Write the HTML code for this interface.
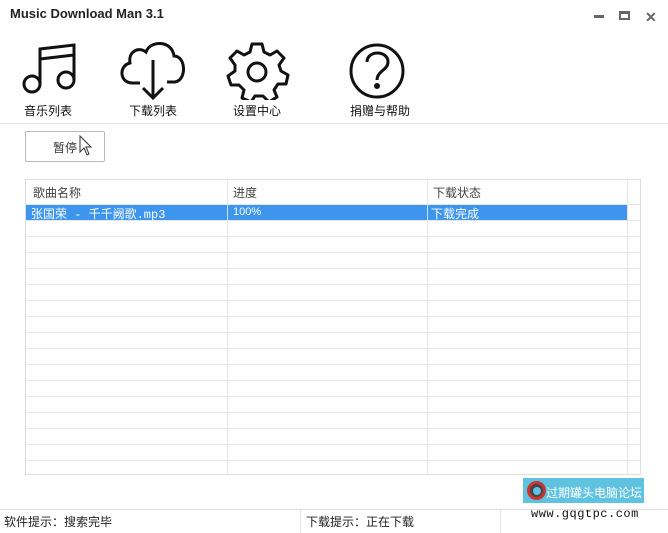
<!DOCTYPE html>
<html><head><meta charset="utf-8"><style>
*{margin:0;padding:0;box-sizing:border-box}
body{width:668px;height:533px;background:#fff;position:relative;overflow:hidden;font-family:"Liberation Sans","Noto Sans CJK SC",sans-serif;color:#222}
.abs{position:absolute}
.title{left:10px;top:6px;font-size:13px;font-weight:bold;color:#222}
.lbl{font-size:12px;top:102px;color:#111}
.grid{left:25px;top:179px;width:616px;height:296px;border:1px solid #ddd}
.rows{left:26px;top:205px;width:614px;height:269px;
background:repeating-linear-gradient(to bottom,#fff 0,#fff 15px,#e8e8e8 15px,#e8e8e8 16px);}
.vl{width:1px;background:#e6e6e6;top:180px;height:294px}
.hdr{font-size:12px;top:184px;color:#444}
.sel{left:26px;top:205px;width:601px;height:15px;background:#3d95ee}
.st{font-size:12px;color:#222;top:513px}
</style></head><body>
<div class="abs title">Music Download Man 3.1</div>
<div class="abs" style="left:594px;top:15px;width:10px;height:3px;background:#666"></div>
<div class="abs" style="left:619px;top:11px;width:11px;height:9px;border:2px solid #666;border-top-width:3px"></div>
<div class="abs" style="left:645px;top:9px;font-size:14px;color:#666;font-weight:bold">✕</div>

<svg class="abs" style="left:0;top:0" width="668" height="100" fill="none" stroke="#111" stroke-width="3">
 <circle cx="32" cy="84" r="8"/><circle cx="66" cy="80" r="8"/>
 <path d="M40 84 V49 L74 45 V80 M40 59 L74 55"/>
 <path d="M140 83 H132 C120 83 118 66 130 63 C128 52 138 46 146 52 C150 40 172 40 174 56 C186 56 187 80 175 82 H167"/>
 <path d="M153 60 V97 M143 88 L153 98 L163 88"/>
 <g transform="translate(257,72)">
  <path d="M-5 -28 L5 -28 L7 -20 L13 -17 L20 -21 L27 -14 L22 -7 L24 -1 L31 3 L29 12 L21 12 L17 18 L20 25 L12 30 L6 24 L-2 24 L-6 30 L-15 26 L-13 18 L-18 13 L-26 13 L-29 4 L-22 -1 L-22 -7 L-27 -14 L-20 -21 L-13 -17 L-7 -20 Z" stroke-linejoin="round"/>
  <circle cx="0" cy="0" r="9"/>
 </g>
 <circle cx="377" cy="71" r="26"/>
 <path d="M367 62 C367 50 388 50 388 62 C388 70 377 71 377 80"/>
 <circle cx="377" cy="86" r="1.5" fill="#111"/>
</svg>
<div class="abs lbl" style="left:24px">音乐列表</div>
<div class="abs lbl" style="left:129px">下载列表</div>
<div class="abs lbl" style="left:233px">设置中心</div>
<div class="abs lbl" style="left:350px">捐赠与帮助</div>
<div class="abs" style="left:0;top:123px;width:668px;height:1px;background:#e4e4e4"></div>

<div class="abs" style="left:25px;top:131px;width:80px;height:31px;border:1px solid #bbb;border-radius:2px;background:#fff"></div>
<div class="abs" style="left:53px;top:139px;font-size:12px;color:#333">暂停</div>
<svg class="abs" style="left:79px;top:135px" width="14" height="22"><path d="M1 1 L1 17 L5 13 L8 20 L10 19 L7 12 L12 12 Z" fill="#fff" stroke="#333" stroke-width="1"/></svg>

<div class="abs grid"></div>
<div class="abs rows"></div>
<div class="abs" style="left:26px;top:180px;width:614px;height:25px;background:#fff;border-bottom:1px solid #e6e6e6"></div>
<div class="abs vl" style="left:227px"></div>
<div class="abs vl" style="left:427px"></div>
<div class="abs vl" style="left:627px"></div>
<div class="abs hdr" style="left:33px">歌曲名称</div>
<div class="abs hdr" style="left:233px">进度</div>
<div class="abs hdr" style="left:433px">下载状态</div>
<div class="abs sel"></div>
<div class="abs" style="left:227px;top:205px;width:1px;height:15px;background:#cfe3fb"></div>
<div class="abs" style="left:427px;top:205px;width:1px;height:15px;background:#cfe3fb"></div>
<div class="abs" style="left:31px;top:205px;font-size:12px;color:#fff;font-family:'Liberation Mono','Noto Sans CJK SC',monospace">张国荣 - 千千阙歌.mp3</div>
<div class="abs" style="left:233px;top:206px;font-size:11px;color:#fff">100%</div>
<div class="abs" style="left:431px;top:205px;font-size:12px;color:#fff">下载完成</div>

<div class="abs" style="left:523px;top:478px;width:121px;height:25px;background:#5fc3e0"></div>
<div class="abs" style="left:527px;top:481px;width:19px;height:19px;border-radius:50%;background:#444;border:3px solid #c33"></div>
<div class="abs" style="left:533px;top:487px;width:8px;height:8px;border-radius:50%;background:#5fc3e0"></div>
<div class="abs" style="left:546px;top:484px;font-size:12px;color:#fff;white-space:nowrap">过期罐头电脑论坛</div>
<div class="abs" style="left:531px;top:507px;font-size:12px;color:#111;letter-spacing:0.5px;font-family:'Liberation Mono',monospace">www.gqgtpc.com</div>

<div class="abs" style="left:0;top:509px;width:668px;height:1px;background:#ddd"></div>
<div class="abs" style="left:300px;top:510px;width:1px;height:23px;background:#e4e4e4"></div>
<div class="abs" style="left:500px;top:510px;width:1px;height:23px;background:#e4e4e4"></div>
<div class="abs st" style="left:4px">软件提示：搜索完毕</div>
<div class="abs st" style="left:306px">下载提示：正在下载</div>
</body></html>
